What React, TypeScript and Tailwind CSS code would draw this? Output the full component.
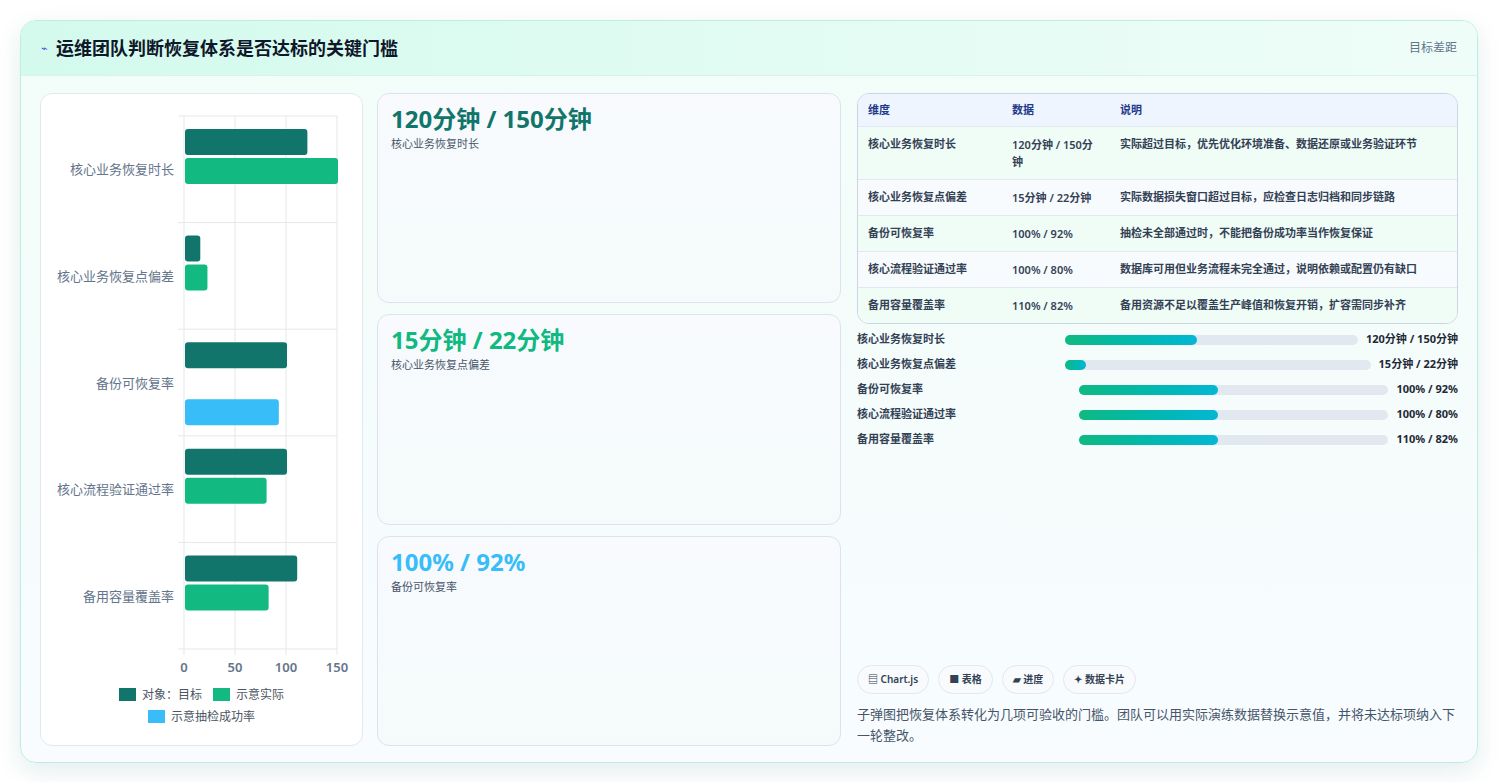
import React from 'react';

const font = { fontFamily: '"Noto Sans", "Noto Sans CJK SC", sans-serif' };

const rows = [
  { name: '核心业务恢复时长', target: 120, actual: 150, data: '120分钟 / 150分钟', note: '实际超过目标，优先优化环境准备、数据还原或业务验证环节', fill: 45, sky: false },
  { name: '核心业务恢复点偏差', target: 15, actual: 22, data: '15分钟 / 22分钟', note: '实际数据损失窗口超过目标，应检查日志归档和同步链路', fill: 7, sky: false },
  { name: '备份可恢复率', target: 100, actual: 92, data: '100% / 92%', note: '抽检未全部通过时，不能把备份成功率当作恢复保证', fill: 45, sky: true },
  { name: '核心流程验证通过率', target: 100, actual: 80, data: '100% / 80%', note: '数据库可用但业务流程未完全通过，说明依赖或配置仍有缺口', fill: 45, sky: false },
  { name: '备用容量覆盖率', target: 110, actual: 82, data: '110% / 82%', note: '备用资源不足以覆盖生产峰值和恢复开销，扩容需同步补齐', fill: 45, sky: false },
];

function BarChart() {
  const x0 = 143;
  const scale = 1.02;
  const top = 22;
  const band = 106.6;
  return (
    <svg width="322" height="651" className="block">
      {[0, 50, 100, 150].map((v) => (
        <line key={v} x1={x0 + v * scale} x2={x0 + v * scale} y1={top} y2={top + band * 5 + 6} stroke="#e5e7eb" />
      ))}
      {[0, 1, 2, 3, 4, 5].map((i) => (
        <line key={i} x1={x0 - 6} x2={x0 + 153} y1={top + i * band} y2={top + i * band} stroke="#e5e7eb" />
      ))}
      {rows.map((r, i) => {
        const y = top + i * band;
        return (
          <g key={r.name}>
            <text x={x0 - 10} y={y + band / 2 + 5} textAnchor="end" fontSize="13" fill="#64748b" style={font}>{r.name}</text>
            <rect x={x0 + 1} y={y + 13} width={r.target * scale} height={26} rx={3} fill="#12756b" />
            <rect x={x0 + 1} y={r.sky ? y + 70 : y + 42} width={r.actual * scale} height={26} rx={3} fill={r.sky ? '#38bdf8' : '#12b981'} />
          </g>
        );
      })}
      {[0, 50, 100, 150].map((v) => (
        <text key={v} x={x0 + v * scale} y={578} textAnchor="middle" fontSize="13" fontWeight="600" fill="#64748b" style={font}>{v}</text>
      ))}
      <rect x={78} y={594} width={17} height={13} fill="#12756b" />
      <text x={101} y={605} fontSize="12" fill="#4b5563" style={font}>对象：目标</text>
      <rect x={172} y={594} width={17} height={13} fill="#12b981" />
      <text x={195} y={605} fontSize="12" fill="#4b5563" style={font}>示意实际</text>
      <rect x={107} y={616} width={17} height={13} fill="#38bdf8" />
      <text x={130} y={627} fontSize="12" fill="#4b5563" style={font}>示意抽检成功率</text>
    </svg>
  );
}

const cards = [
  { value: '120分钟 / 150分钟', label: '核心业务恢复时长', color: 'text-[#12756b]' },
  { value: '15分钟 / 22分钟', label: '核心业务恢复点偏差', color: 'text-[#10b981]' },
  { value: '100% / 92%', label: '备份可恢复率', color: 'text-[#38bdf8]' },
];

export default function App() {
  return (
    <div className="min-h-screen bg-white p-5" style={font}>
      <div className="flex h-[743px] flex-col overflow-hidden rounded-2xl border border-[#bfeee0] bg-gradient-to-b from-[#f2fdf8] to-[#f8fcff] shadow-[0_8px_24px_rgba(15,118,110,0.12)]">
        <div className="flex h-[55px] shrink-0 items-center justify-between border-b border-[#d7f3ea] bg-gradient-to-r from-[#d3faed] to-[#effdf8] px-5">
          <div className="flex items-center gap-2">
            <span className="text-[11px] text-[#4f46e5]">⌁</span>
            <h1 className="text-[18px] font-bold text-[#0f172a]">运维团队判断恢复体系是否达标的关键门槛</h1>
          </div>
          <span className="text-[12px] text-[#64748b]">目标差距</span>
        </div>
        <div className="flex flex-1 gap-[14px] px-[19px] pb-[18px] pt-[17px]">
          <div className="w-[323px] shrink-0 rounded-xl border border-[#e2e8f0] bg-white">
            <BarChart />
          </div>
          <div className="flex w-[464px] shrink-0 flex-col gap-[11px]">
            {cards.map((c) => (
              <div key={c.label} className="flex-1 rounded-xl border border-[#dbe4ee] bg-gradient-to-b from-[#f8fafe] to-[#f5fbfb] px-[13px] py-[10px]">
                <div className={`text-[24px] font-bold leading-tight ${c.color}`}>{c.value}</div>
                <div className="mt-[2px] text-[11px] text-[#475569]">{c.label}</div>
              </div>
            ))}
          </div>
          <div className="flex flex-1 flex-col pl-[2px]">
            <div className="overflow-hidden rounded-xl border border-[#cbd5e1] text-[11px]">
              <table className="w-full border-collapse text-left">
                <thead>
                  <tr className="bg-[#eef5fe] text-[#1e3a8a]">
                    <th className="h-[32px] w-[144px] px-[10px] font-semibold">维度</th>
                    <th className="w-[108px] px-[10px] font-semibold">数据</th>
                    <th className="px-[10px] font-semibold">说明</th>
                  </tr>
                </thead>
                <tbody className="text-[#334155]">
                  {rows.map((r, i) => (
                    <tr key={r.name} className={`border-t border-[#e2e8f0] align-top ${i % 2 === 0 ? 'bg-[#f0fcf6]' : 'bg-[#f8fbfd]'}`}>
                      <td className="px-[10px] py-[9px] font-semibold">{r.name}</td>
                      <td className="px-[10px] py-[9px] font-semibold leading-[17px]">{r.data}</td>
                      <td className="px-[10px] py-[9px] font-semibold">{r.note}</td>
                    </tr>
                  ))}
                </tbody>
              </table>
            </div>
            <div className="mt-[8px] flex flex-col gap-[9px]">
              {rows.map((r, i) => (
                <div key={r.name} className="flex h-[16px] items-center gap-[8px] text-[11px] font-semibold text-[#334155]">
                  <span className={`shrink-0 ${i < 2 ? 'w-[200px]' : 'w-[214px]'}`}>{r.name}</span>
                  <div className="h-[10px] flex-1 rounded-full bg-[#e2e8f0]">
                    <div className="h-full rounded-full bg-gradient-to-r from-[#10b981] to-[#06b6d4]" style={{ width: `${r.fill}%` }} />
                  </div>
                  <span className="shrink-0 font-bold text-[#1f2937]">{r.data}</span>
                </div>
              ))}
            </div>
            <div className="mt-auto">
              <div className="flex gap-[9px] text-[10px] font-semibold text-[#334155]">
                {['▤ Chart.js', '■ 表格', '▰ 进度', '✦ 数据卡片'].map((t) => (
                  <span key={t} className="rounded-full border border-[#e2e8f0] bg-[#f8fafc] px-[10px] py-[6px]">{t}</span>
                ))}
              </div>
              <p className="mt-[10px] text-[13px] leading-[21px] text-[#475569]">
                子弹图把恢复体系转化为几项可验收的门槛。团队可以用实际演练数据替换示意值，并将未达标项纳入下一轮整改。
              </p>
            </div>
          </div>
        </div>
      </div>
    </div>
  );
}
